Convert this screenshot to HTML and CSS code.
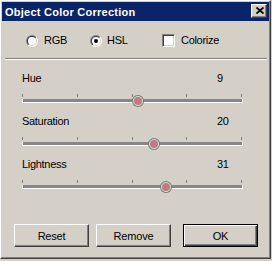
FILE: index.html
```html
<!DOCTYPE html>
<html lang="en">
<head>
    <meta charset="UTF-8">
    <title>Object Color Correction</title>
    <link rel="stylesheet" href="styles.css">
</head>
<body>
    <div class="window">
        <div class="titlebar">
            <span class="title">Object Color Correction</span>
            <button class="close-btn">
                <svg width="8" height="7" viewBox="0 0 8 7">
                    <path d="M0.5 0.5 L7.5 6.5 M7.5 0.5 L0.5 6.5" stroke="#000" stroke-width="1.7" fill="none"/>
                </svg>
            </button>
        </div>

        <div class="options">
            <label class="option opt-rgb">
                <svg class="radio" width="12" height="12" viewBox="0 0 12 12">
                    <defs>
                        <linearGradient id="outer" x1="0" y1="0" x2="1" y2="1">
                            <stop offset="50%" stop-color="#808080"/>
                            <stop offset="50%" stop-color="#ffffff"/>
                        </linearGradient>
                        <linearGradient id="inner" x1="0" y1="0" x2="1" y2="1">
                            <stop offset="50%" stop-color="#404040"/>
                            <stop offset="50%" stop-color="#d4d0c8"/>
                        </linearGradient>
                    </defs>
                    <circle cx="6" cy="6" r="6" fill="url(#outer)"/>
                    <circle cx="6" cy="6" r="5" fill="url(#inner)"/>
                    <circle cx="6" cy="6" r="4" fill="#fff"/>
                </svg>
                <span>RGB</span>
            </label>
            <label class="option opt-hsl">
                <svg class="radio" width="12" height="12" viewBox="0 0 12 12">
                    <circle cx="6" cy="6" r="6" fill="url(#outer)"/>
                    <circle cx="6" cy="6" r="5" fill="url(#inner)"/>
                    <circle cx="6" cy="6" r="4" fill="#fff"/>
                    <circle cx="6" cy="6" r="2" fill="#000"/>
                </svg>
                <span>HSL</span>
            </label>
            <label class="option">
                <span class="checkbox"></span>
                <span>Colorize</span>
            </label>
        </div>

        <div class="separator"></div>

        <div class="sliders">
            <div class="slider">
                <div class="slider-head"><span>Hue</span><span>9</span></div>
                <div class="ticks"><i></i><i></i><i></i><i></i><i></i></div>
                <div class="track">
                    <span class="thumb" style="left: 52.5%"></span>
                </div>
            </div>
            <div class="slider">
                <div class="slider-head"><span>Saturation</span><span>20</span></div>
                <div class="ticks"><i></i><i></i><i></i><i></i><i></i></div>
                <div class="track">
                    <span class="thumb" style="left: 60%"></span>
                </div>
            </div>
            <div class="slider">
                <div class="slider-head"><span>Lightness</span><span>31</span></div>
                <div class="ticks"><i></i><i></i><i></i><i></i><i></i></div>
                <div class="track">
                    <span class="thumb" style="left: 65.5%"></span>
                </div>
            </div>
        </div>

        <div class="buttons">
            <button class="btn">Reset</button>
            <button class="btn btn-remove">Remove</button>
            <button class="btn btn-default">OK</button>
        </div>
    </div>
</body>
</html>
```

FILE: styles.css
```css
* {
    margin: 0;
    padding: 0;
    box-sizing: border-box;
}

body {
    background: #d4d0c8;
    font-family: 'Liberation Sans', Arial, sans-serif;
    font-size: 11px;
    color: #000;
}

.window {
    width: 271px;
    height: 259px;
    padding: 1px;
    background: #d4d0c8;
    border: 1px solid;
    border-color: #fff #404040 #404040 #fff;
    box-shadow: inset -1px -1px #808080;
}

/* Заголовок окна */
.titlebar {
    height: 19px;
    display: flex;
    align-items: flex-start;
    justify-content: space-between;
    padding: 0 2px 0 3px;
    background: #0a246a;
}

.title {
    color: #fff;
    font-weight: bold;
    letter-spacing: 0.25px;
    line-height: 19px;
    padding-top: 1px;
}

.close-btn {
    width: 16px;
    height: 14px;
    margin-top: 2px;
    display: flex;
    align-items: center;
    justify-content: center;
    padding: 0 0 1px 1px;
    background: #d4d0c8;
    border: 1px solid;
    border-color: #fff #404040 #404040 #fff;
    box-shadow: inset -1px -1px #808080;
}

.options {
    display: flex;
    align-items: center;
    height: 13px;
    margin-top: 13px;
    padding-left: 24px;
    letter-spacing: -0.3px;
}

.option {
    display: flex;
    align-items: center;
    gap: 6px;
    line-height: 13px;
}

.opt-rgb {
    width: 64px;
}

.opt-hsl {
    width: 72px;
}

.opt-hsl .radio {
    margin-right: -1px;
}

.checkbox {
    width: 13px;
    height: 13px;
    background: #fff;
    border: 1px solid;
    border-color: #808080 #fff #fff #808080;
    box-shadow: inset 1px 1px #404040, inset -1px -1px #d4d0c8;
}

.separator {
    margin: 11px 2px 0 3px;
    height: 2px;
    border-top: 1px solid #808080;
    border-bottom: 1px solid #fff;
}

/* Ползунки */
.sliders {
    padding-left: 20px;
    padding-top: 12px;
}

.slider {
    margin-bottom: 12px;
}

.slider:last-child {
    margin-bottom: 0;
}

.slider-head {
    display: grid;
    grid-template-columns: 195px auto;
    line-height: 13px;
    letter-spacing: -0.3px;
}

.ticks {
    display: flex;
    justify-content: space-between;
    width: 220px;
    height: 3px;
    margin-top: 9px;
}

.ticks i {
    width: 1px;
    height: 3px;
    background: #808080;
}

.track {
    position: relative;
    width: 221px;
    height: 4px;
    margin-top: 2px;
    background: #868686;
    border-left: 1px solid #fff;
    border-right: 1px solid #fff;
    border-bottom: 1px solid #fff;
}

.thumb {
    position: absolute;
    top: -4px;
    width: 12px;
    height: 12px;
    transform: translateX(-50%);
    border-radius: 50%;
    background: radial-gradient(circle at 50% 50%, #c27a80 0 3.5px, #b0a8a8 4px, #d8d4d0 4.6px, #7a7a7a 5.4px, #707070 6px);
}

.buttons {
    display: flex;
    margin-top: 35px;
    padding-left: 12px;
}

.btn {
    width: 75px;
    height: 23px;
    font-family: 'Liberation Sans', Arial, sans-serif;
    font-size: 11px;
    letter-spacing: -0.2px;
    color: #000;
    background: #d4d0c8;
    border: 1px solid;
    border-color: #fff #404040 #404040 #fff;
    box-shadow: inset -1px -1px #808080;
}

.btn-remove {
    margin-left: 7px;
}

.btn-default {
    margin-left: 12px;
    border-color: #000;
    box-shadow: inset 1px 1px #fff, inset -1px -1px #404040, inset -2px -2px #808080;
}
```
